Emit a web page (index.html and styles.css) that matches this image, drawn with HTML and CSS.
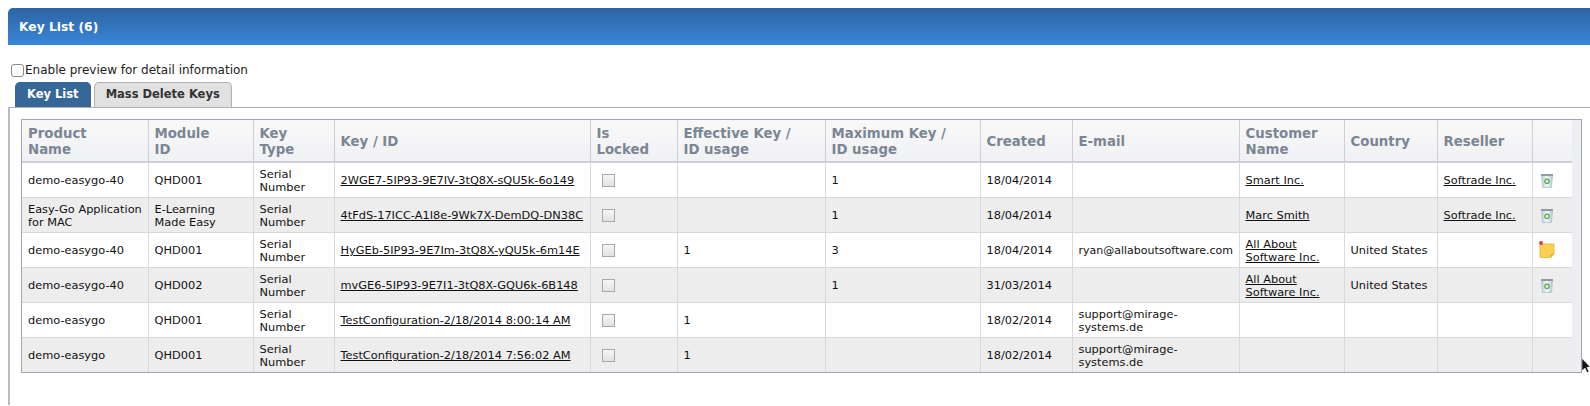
FILE: index.html
```html
<!DOCTYPE html>
<html lang="en">
<head>
<meta charset="utf-8">
<title>Key List</title>
<link rel="stylesheet" href="styles.css">
</head>
<body>
<svg class="defs" width="0" height="0" aria-hidden="true">
  <defs>
    <linearGradient id="binFill" x1="0" y1="0" x2="1" y2="0">
      <stop offset="0" stop-color="#b9cfd8"/>
      <stop offset=".5" stop-color="#eef6f8"/>
      <stop offset="1" stop-color="#b5cad6"/>
    </linearGradient>
    <symbol id="bin" viewBox="0 0 12 14">
      <path d="M.5 1.5h11l-1 12h-9z" fill="url(#binFill)" stroke="#a9bdc8" stroke-width=".7"/>
      <rect x="0" y="0" width="12" height="2" fill="#8f9aa3"/>
      <circle cx="6" cy="7.3" r="2.2" fill="none" stroke="#5aa83c" stroke-width="1.2"/>
    </symbol>
    <symbol id="note" viewBox="0 0 16 17">
      <path d="M1 3h14v10l-3 3.500H1z" fill="#fbcf4f" stroke="#e5ab2e" stroke-width=".7"/>
      <path d="M15 13l-3.500.4-.2 3.100z" fill="#e5a93a"/>
      <circle cx="2" cy="2" r="2" fill="#d8413c"/>
    </symbol>
  </defs>
</svg>
<section class="panel">
  <h1 class="panel-title">Key List (6)</h1>
  <div class="panel-body">
    <label class="preview"><input type="checkbox" class="preview-box">Enable preview for detail information</label>
    <nav class="tabs">
      <a class="tab tab-active">Key List</a>
      <a class="tab">Mass Delete Keys</a>
    </nav>
    <div class="tab-body">
      <div class="grid-wrap">
        <table class="grid">
          <colgroup>
            <col class="c1"><col class="c2"><col class="c3"><col class="c4"><col class="c5"><col class="c6"><col class="c7"><col class="c8"><col class="c9"><col class="c10"><col class="c11"><col class="c12"><col class="c13">
          </colgroup>
          <thead>
            <tr>
              <th>Product<br>Name</th><th>Module<br>ID</th><th>Key<br>Type</th><th>Key / ID</th><th>Is<br>Locked</th><th>Effective Key /<br>ID usage</th><th>Maximum Key /<br>ID usage</th><th>Created</th><th>E-mail</th><th>Customer<br>Name</th><th>Country</th><th>Reseller</th><th></th>
            </tr>
          </thead>
          <tbody>
            <tr>
              <td>demo-easygo-40</td><td>QHD001</td><td>Serial<br>Number</td><td><a href="#">2WGE7-5IP93-9E7IV-3tQ8X-sQU5k-6o149</a></td><td><input type="checkbox" class="lock" disabled></td><td></td><td>1</td><td>18/04/2014</td><td></td><td><a href="#">Smart Inc.</a></td><td></td><td><a href="#">Softrade Inc.</a></td><td><svg class="ico-bin"><use href="#bin"/></svg></td>
            </tr>
            <tr>
              <td>Easy-Go Application<br>for MAC</td><td>E-Learning<br>Made Easy</td><td>Serial<br>Number</td><td><a href="#">4tFdS-17ICC-A1I8e-9Wk7X-DemDQ-DN38C</a></td><td><input type="checkbox" class="lock" disabled></td><td></td><td>1</td><td>18/04/2014</td><td></td><td><a href="#">Marc Smith</a></td><td></td><td><a href="#">Softrade Inc.</a></td><td><svg class="ico-bin"><use href="#bin"/></svg></td>
            </tr>
            <tr>
              <td>demo-easygo-40</td><td>QHD001</td><td>Serial<br>Number</td><td><a href="#">HyGEb-5IP93-9E7Im-3tQ8X-yQU5k-6m14E</a></td><td><input type="checkbox" class="lock" disabled></td><td>1</td><td>3</td><td>18/04/2014</td><td class="email">ryan@allaboutsoftware.com</td><td><a href="#">All About<br>Software Inc.</a></td><td>United States</td><td></td><td><svg class="ico-note"><use href="#note"/></svg></td>
            </tr>
            <tr>
              <td>demo-easygo-40</td><td>QHD002</td><td>Serial<br>Number</td><td><a href="#">mvGE6-5IP93-9E7I1-3tQ8X-GQU6k-6B148</a></td><td><input type="checkbox" class="lock" disabled></td><td></td><td>1</td><td>31/03/2014</td><td></td><td><a href="#">All About<br>Software Inc.</a></td><td>United States</td><td></td><td><svg class="ico-bin"><use href="#bin"/></svg></td>
            </tr>
            <tr>
              <td>demo-easygo</td><td>QHD001</td><td>Serial<br>Number</td><td><a href="#">TestConfiguration-2/18/2014 8:00:14 AM</a></td><td><input type="checkbox" class="lock" disabled></td><td>1</td><td></td><td>18/02/2014</td><td>support@mirage-<br>systems.de</td><td></td><td></td><td></td><td></td>
            </tr>
            <tr>
              <td>demo-easygo</td><td>QHD001</td><td>Serial<br>Number</td><td><a href="#">TestConfiguration-2/18/2014 7:56:02 AM</a></td><td><input type="checkbox" class="lock" disabled></td><td>1</td><td></td><td>18/02/2014</td><td>support@mirage-<br>systems.de</td><td></td><td></td><td></td><td></td>
            </tr>
          </tbody>
        </table>
      </div>
    </div>
  </div>
</section>
<svg class="cursor" viewBox="0 0 10 18" aria-hidden="true"><path d="M0 0l9 9.500-3.600.3 2.200 5-2 1-2.100-5L0 13.500z" fill="#111" stroke="#fff" stroke-width=".5"/></svg>
</body>
</html>
```
FILE: styles.css
```css
html, body {
  margin: 0;
  height: 406px;
  overflow: hidden;
  background: #fff;
}
body {
  padding: 8px 0 0 8px;
  box-sizing: border-box;
  font-family: "DejaVu Sans", Verdana, sans-serif;
  font-size: 11.35px;
  color: #111;
  position: relative;
}
.defs { position: absolute; }
.panel-title {
  margin: 0;
  height: 37px;
  line-height: 38px;
  padding-left: 11px;
  font-size: 12.3px;
  font-weight: bold;
  color: #fff;
  background: linear-gradient(#2d64a2, #3a86d8);
  border-radius: 5px 0 0 0;
}
.panel-body {
  height: 361px;
  box-sizing: border-box;
}
.preview {
  display: flex;
  align-items: center;
  height: 14px;
  margin: 18px 0 0 3px;
  font-size: 12px;
  color: #222;
}
.preview-box {
  appearance: none;
  width: 13px;
  height: 13px;
  margin: 0 1px 0 0;
  background: #fff;
  border: 1px solid #8a8a8a;
  border-radius: 3px;
}
.tabs {
  display: flex;
  gap: 3px;
  height: 25px;
  margin: 5px 0 0 7px;
}
.tab {
  display: block;
  box-sizing: border-box;
  height: 25px;
  line-height: 23px;
  padding: 0 11px;
  font-size: 11.5px;
  font-weight: bold;
  color: #333;
  background: #e1e1e1;
  border: 1px solid #b0b0b0;
  border-bottom: 0;
  border-radius: 5px 5px 0 0;
}
.tab-active {
  color: #fff;
  background: #356799;
  border-color: #356799;
}
.tab-body {
  height: 298px;
  box-sizing: border-box;
  padding: 11px 8px 0 11px;
  border-top: 1px solid #adadb5;
  border-left: 2px solid #bcbcc2;
}
.grid-wrap {
  width: 1561px;
  box-sizing: border-box;
  height: 254px;
  border: 1px solid #a3a5b3;
  background: #eceef3;
}
.grid {
  width: 1550px;
  table-layout: fixed;
  border-collapse: collapse;
}
.c1 { width: 126px; }
.c2 { width: 105px; }
.c3 { width: 81px; }
.c4 { width: 256px; }
.c5 { width: 87px; }
.c6 { width: 148px; }
.c7 { width: 155px; }
.c8 { width: 92px; }
.c9 { width: 167px; }
.c10 { width: 105px; }
.c11 { width: 93px; }
.c12 { width: 95px; }
.c13 { width: 40px; }
.grid th {
  height: 42px;
  padding: 2px 6px 0;
  box-sizing: border-box;
  text-align: left;
  font-size: 13.3px;
  line-height: 16px;
  font-weight: bold;
  color: #7a8694;
  background: linear-gradient(#f8f8f9, #f0f1f3);
  border-left: 1px solid #cdced8;
  border-bottom: 2px solid #cdced8;
  white-space: nowrap;
}
.grid td {
  height: 35px;
  padding: 2px 6px 0;
  box-sizing: border-box;
  line-height: 13px;
  background: #fff;
  border-left: 1px solid #d8d8de;
  border-bottom: 1px solid #d8d8de;
  white-space: nowrap;
}
.grid th:first-child, .grid td:first-child { border-left: 0; }
.grid tbody tr:nth-child(even) td { background: #ededed; }
.grid tbody tr:last-child td { border-bottom: 0; }
.grid a { color: #111; text-decoration: underline; }
.grid .email { font-size: 11px; }
.lock {
  appearance: none;
  display: block;
  width: 13px;
  height: 13px;
  margin: 0 0 0 5px;
  background: linear-gradient(#f6f6f6, #e2e2e2);
  border: 1px solid #a8a8a8;
}
.ico-bin {
  display: block;
  width: 12px;
  height: 14px;
  margin-left: 2px;
}
.ico-note {
  display: block;
  width: 16px;
  height: 17px;
  margin: -3px 0 0 0;
}
.cursor {
  position: absolute;
  left: 1582px;
  top: 358px;
  width: 9px;
  height: 17px;
}
```
